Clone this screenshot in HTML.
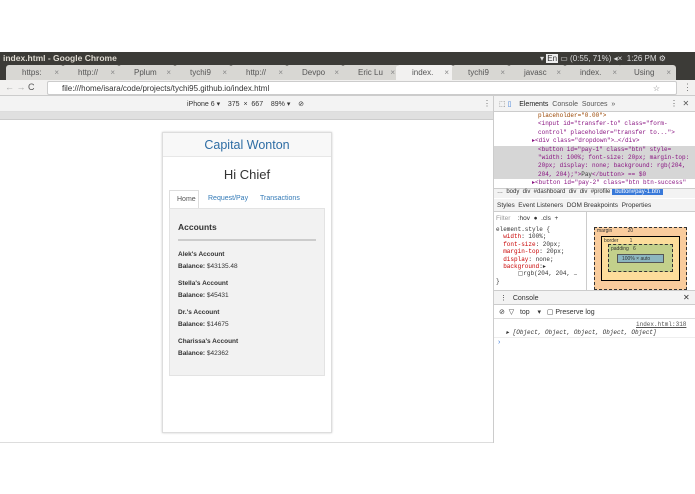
<!DOCTYPE html><html><head><style>
*{margin:0;padding:0;box-sizing:border-box}
body{width:695px;height:494px;background:#fff;position:relative;overflow:hidden;font-family:"Liberation Sans",sans-serif}
.a{position:absolute;white-space:nowrap}
.m{font-family:"Liberation Mono",monospace}
.tab{position:absolute;top:65px;height:15px;background:#d8d7d3;border-radius:3px 3px 0 0;font-size:8px;color:#555;padding:3px 0 0 16px;width:58px;overflow:hidden}
.tab:after{content:"×";position:absolute;right:5px;top:3px;color:#888}
.dt{font-size:7px;color:#333}
</style></head><body>
<div class="a" style="left:0;top:52px;width:695px;height:13px;background:#3c3b37"></div>
<div class="a" style="left:3px;top:53px;font-size:8.5px;font-weight:bold;color:#dfdbd2">index.html - Google Chrome</div>
<div class="a" style="left:540px;top:54px;font-size:8px;color:#ddd">▾ <span style="background:#eee;color:#333;padding:0 1px">En</span> ▭ (0:55, 71%) ◂× &nbsp;1:26 PM ⚙</div>
<div class="a" style="left:0;top:65px;width:695px;height:15px;background:#3c3b37"></div>
<div class="tab" style="left:6px">https:</div>
<div class="tab" style="left:62px">http://</div>
<div class="tab" style="left:118px">Pplum</div>
<div class="tab" style="left:174px">tychi9</div>
<div class="tab" style="left:230px">http://</div>
<div class="tab" style="left:286px">Devpo</div>
<div class="tab" style="left:342px">Eric Lu</div>
<div class="tab" style="left:396px;background:#f2f1f0">index.</div>
<div class="tab" style="left:452px">tychi9</div>
<div class="tab" style="left:508px">javasc</div>
<div class="tab" style="left:564px">index.</div>
<div class="tab" style="left:618px">Using</div>
<div class="a" style="left:0;top:80px;width:695px;height:16px;background:#f2f1f0;border-bottom:1px solid #ccc"></div>
<div class="a" style="left:5px;top:82px;font-size:9px;color:#aaa">← → <span style="color:#555">C</span></div>
<div class="a" style="left:47px;top:81px;width:630px;height:14px;background:#fff;border:1px solid #ccc;border-radius:2px;font-size:8px;color:#333;padding:2px 0 0 14px">file:///home/isara/code/projects/tychi95.github.io/index.html<span style="position:absolute;right:16px;color:#777">☆</span></div>
<div class="a" style="left:683px;top:82px;font-size:9px;color:#777">⋮</div>
<div class="a" style="left:0;top:96px;width:493px;height:16px;background:#f3f3f3;border-bottom:1px solid #ddd"></div>
<div class="a" style="left:187px;top:100px;font-size:7px;color:#333">iPhone 6 ▾ &nbsp;&nbsp; 375 &nbsp;× &nbsp;667 &nbsp;&nbsp; 89% ▾ &nbsp;&nbsp; ⊘</div>
<div class="a" style="left:483px;top:99px;font-size:8px;color:#666">⋮</div>
<div class="a" style="left:0;top:112px;width:493px;height:8px;background:#e0e0e0;border-bottom:1px solid #ccc"></div>
<!-- device -->
<div class="a" style="left:162px;top:132px;width:170px;height:301px;background:#fff;border:1px solid #ddd;box-shadow:0 0 2px #ccc"></div>
<div class="a" style="left:163px;top:133px;width:168px;height:24px;background:#f8f8f8;border-bottom:1px solid #e7e7e7"></div>
<div class="a" style="left:163px;top:138px;width:168px;text-align:center;font-size:12.5px;color:#2e6da4">Capital Wonton</div>
<div class="a" style="left:163px;top:167px;width:168px;text-align:center;font-size:13px;color:#333">Hi Chief</div>
<div class="a" style="left:169px;top:190px;width:30px;height:19px;background:#fff;border:1px solid #ddd;border-bottom:none;font-size:7px;color:#555;padding:5px 0 0 7px">Home</div>
<div class="a" style="left:208px;top:195px;font-size:7px;color:#337ab7">Request/Pay</div>
<div class="a" style="left:260px;top:195px;font-size:7px;color:#337ab7">Transactions</div>
<div class="a" style="left:169px;top:208px;width:156px;height:168px;background:#f2f2f2;border:1px solid #e3e3e3"></div>
<div class="a" style="left:178px;top:222px;font-size:8.5px;font-weight:bold;color:#333">Accounts</div>
<div class="a" style="left:178px;top:239px;width:138px;height:2px;background:#ccc"></div>
<div class="a" style="left:178px;top:249px;font-size:6.5px;line-height:12px;color:#333">
<div><b>Alek's Account</b></div><div><b>Balance:</b> $43135.48</div><div style="height:5px"></div>
<div><b>Stella's Account</b></div><div><b>Balance:</b> $45431</div><div style="height:5px"></div>
<div><b>Dr.'s Account</b></div><div><b>Balance:</b> $14675</div><div style="height:5px"></div>
<div><b>Charissa's Account</b></div><div><b>Balance:</b> $42362</div></div>
<div class="a" style="left:0;top:442px;width:493px;height:1px;background:#ddd"></div>
<!-- devtools -->
<div class="a" style="left:493px;top:96px;width:202px;height:347px;background:#fff;border-left:1px solid #ccc"></div>
<div class="a" style="left:494px;top:96px;width:201px;height:16px;background:#f3f3f3;border-bottom:1px solid #ccc"></div>
<div class="a dt" style="left:499px;top:100px;color:#555">⬚ <span style="color:#3879d9">▯</span> &nbsp;&nbsp;&nbsp;<span style="color:#222">Elements</span> &nbsp;Console &nbsp;Sources &nbsp;» </div>
<div class="a dt" style="left:670px;top:99px;font-size:8px;color:#555">⋮ &nbsp;✕</div>
<div class="a m" style="left:494px;top:112px;width:201px;height:76px;font-size:6px;line-height:8.4px;color:#881280;padding-left:8px">
<div style="padding-left:36px;color:#994500">placeholder="0.00"&gt;</div>
<div style="padding-left:36px">&lt;input id="transfer-to" class="form-</div>
<div style="padding-left:36px">control" placeholder="transfer to..."&gt;</div>
<div style="padding-left:30px">▸&lt;div class="dropdown"&gt;…&lt;/div&gt;</div>
<div style="background:#d6d6d6;margin-left:-8px;padding-left:44px">&lt;button id="pay-1" class="btn" style=<br>"width: 100%; font-size: 20px; margin-top:<br>20px; display: none; background: rgb(204,<br>204, 204);"&gt;<span style="color:#333">Pay</span>&lt;/button&gt; == $0</div>
<div style="padding-left:30px">▸&lt;button id="pay-2" class="btn btn-success"</div>
<div style="padding-left:36px">style="width: 100%; font-size: 20px; margin-</div></div>
<div class="a" style="left:494px;top:188px;width:201px;height:10px;background:#f3f3f3;border-top:1px solid #ccc"></div>
<div class="a dt" style="left:497px;top:189px;font-size:6px">… &nbsp;body &nbsp;div &nbsp;#dashboard &nbsp;div &nbsp;div &nbsp;#profile <span style="background:#3879d9;color:#fff;padding:0 3px">button#pay-1.btn</span></div>
<div class="a" style="left:494px;top:199px;width:201px;height:13px;background:#f3f3f3;border-bottom:1px solid #ccc"></div>
<div class="a dt" style="left:497px;top:202px;font-size:6.5px">Styles &nbsp;Event Listeners &nbsp;DOM Breakpoints &nbsp;Properties</div>
<div class="a" style="left:586px;top:212px;width:1px;height:78px;background:#ccc"></div>
<div class="a dt" style="left:496px;top:215px;color:#999;font-size:6.5px">Filter &nbsp;&nbsp;&nbsp;<span style="color:#333">:hov &nbsp;● &nbsp;.cls &nbsp;+</span></div>
<div class="a m" style="left:496px;top:226px;font-size:6px;line-height:7.4px;color:#333">element.style {<br>&nbsp;&nbsp;<span style="color:#c80000">width</span>: 100%;<br>&nbsp;&nbsp;<span style="color:#c80000">font-size</span>: 20px;<br>&nbsp;&nbsp;<span style="color:#c80000">margin-top</span>: 20px;<br>&nbsp;&nbsp;<span style="color:#c80000">display</span>: none;<br>&nbsp;&nbsp;<span style="color:#c80000">background</span>:▸<br>&nbsp;&nbsp;&nbsp;&nbsp;&nbsp;&nbsp;▢rgb(204, 204, …<br>}<br><br>.btn {&nbsp;&nbsp; buttons.less:13</div>
<div class="a" style="left:594px;top:227px;width:93px;height:63px;background:#f9cc9d;border:1px dashed #333;font-size:5px;color:#333"></div>
<div class="a" style="left:601px;top:236px;width:79px;height:45px;background:#fddd9b;border:1px solid #000"></div>
<div class="a" style="left:608px;top:244px;width:65px;height:28px;background:#c3d08b;border:1px dashed #333"></div>
<div class="a" style="left:617px;top:254px;width:47px;height:9px;background:#8cb6c0;border:1px solid #555"></div>
<div class="a dt" style="left:597px;top:228px;font-size:5px">margin &nbsp;&nbsp;&nbsp;&nbsp;&nbsp;&nbsp;&nbsp;&nbsp;&nbsp;&nbsp;20</div>
<div class="a dt" style="left:604px;top:238px;font-size:5px">border &nbsp;&nbsp;&nbsp;&nbsp;&nbsp;&nbsp;&nbsp;1</div>
<div class="a dt" style="left:611px;top:246px;font-size:5px">padding &nbsp;&nbsp;6</div>
<div class="a dt" style="left:622px;top:256px;font-size:5px">100% × auto</div>
<div class="a" style="left:494px;top:290px;width:201px;height:15px;background:#f3f3f3;border-top:1px solid #ccc;border-bottom:1px solid #ccc"></div>
<div class="a dt" style="left:500px;top:294px">⋮ &nbsp;&nbsp;Console</div>
<div class="a dt" style="left:683px;top:293px;font-size:8px">✕</div>
<div class="a dt" style="left:499px;top:308px">⊘ &nbsp;▽ &nbsp;&nbsp;top &nbsp;&nbsp;&nbsp;▾ &nbsp;&nbsp;▢ Preserve log</div>
<div class="a" style="left:494px;top:318px;width:201px;height:1px;background:#ddd"></div>
<div class="a m" style="left:636px;top:321px;font-size:6px;color:#555;text-decoration:underline">index.html:318</div>
<div class="a m" style="left:506px;top:329px;font-size:6px;color:#333;font-style:italic">▸ [Object, Object, Object, Object, Object]</div>
<div class="a" style="left:494px;top:337px;width:201px;height:1px;background:#eee"></div>
<div class="a" style="left:498px;top:339px;font-size:7px;color:#3879d9">›</div>
</body></html>
